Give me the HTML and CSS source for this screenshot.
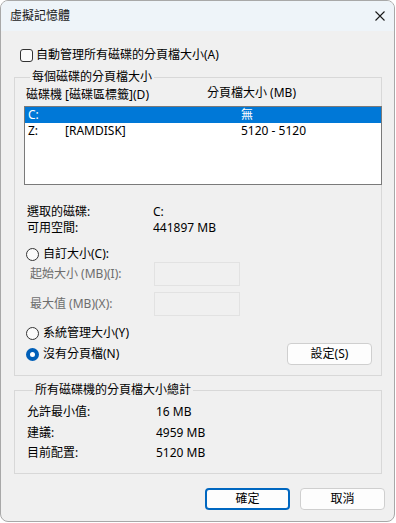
FILE: index.html
```html
<!DOCTYPE html>
<html lang="zh-Hant">
<head>
    <meta charset="UTF-8">
    <meta name="viewport" content="width=device-width, initial-scale=1.0">
    <title>虛擬記憶體</title>
    <link rel="stylesheet" href="styles.css">
</head>
<body>
    <div class="window">
        <div class="titlebar">
            <span class="title">虛擬記憶體</span>
            <svg class="close" width="10" height="10" viewBox="0 0 10 10">
                <path d="M0.5 0.5 L9.5 9.5 M9.5 0.5 L0.5 9.5" stroke="#1a1a1a" stroke-width="1.1" fill="none"/>
            </svg>
        </div>

        <div class="content">
            <div class="check-row">
                <span class="checkbox"></span>
                <span>自動管理所有磁碟的分頁檔大小(A)</span>
            </div>

            <fieldset class="group group-drives">
                <legend>每個磁碟的分頁檔大小</legend>

                <div class="list-head">
                    <span class="col-drive">磁碟機 [磁碟區標籤](D)</span>
                    <span class="col-size">分頁檔大小 (MB)</span>
                </div>
                <div class="listbox">
                    <div class="list-row selected">
                        <span>C:</span>
                        <span></span>
                        <span>無</span>
                    </div>
                    <div class="list-row">
                        <span>Z:</span>
                        <span>[RAMDISK]</span>
                        <span>5120 - 5120</span>
                    </div>
                </div>

                <div class="info">
                    <span>選取的磁碟:</span><span>C:</span>
                    <span>可用空間:</span><span>441897 MB</span>
                </div>

                <div class="radio-row custom">
                    <span class="radio"></span>
                    <span>自訂大小(C):</span>
                </div>
                <div class="field-row first">
                    <span class="field-label">起始大小 (MB)(I):</span>
                    <span class="textbox"></span>
                </div>
                <div class="field-row">
                    <span class="field-label">最大值 (MB)(X):</span>
                    <span class="textbox"></span>
                </div>

                <div class="radio-row system">
                    <span class="radio"></span>
                    <span>系統管理大小(Y)</span>
                </div>
                <div class="radio-line">
                    <div class="radio-row">
                        <span class="radio checked"></span>
                        <span>沒有分頁檔(N)</span>
                    </div>
                    <button class="btn btn-set">設定(S)</button>
                </div>
            </fieldset>

            <fieldset class="group group-total">
                <legend>所有磁碟機的分頁檔大小總計</legend>
                <div class="totals">
                    <span>允許最小值:</span><span>16 MB</span>
                    <span>建議:</span><span>4959 MB</span>
                    <span>目前配置:</span><span>5120 MB</span>
                </div>
            </fieldset>

            <div class="buttons">
                <button class="btn btn-primary">確定</button>
                <button class="btn">取消</button>
            </div>
        </div>
    </div>
</body>
</html>
```

FILE: styles.css
```css
* {
    margin: 0;
    padding: 0;
    box-sizing: border-box;
}

body {
    font-family: "Noto Sans", "Noto Sans CJK TC", sans-serif;
    font-size: 12px;
    line-height: 16px;
    color: #000;
    background: #ffffff;
}

.window {
    width: 395px;
    height: 522px;
    border: 1px solid #a8a8a8;
    border-radius: 8px;
    overflow: hidden;
    background: #f0f0f0;
    display: flex;
    flex-direction: column;
}

.titlebar {
    height: 30px;
    background: #eef4f9;
    display: flex;
    align-items: center;
    justify-content: space-between;
    padding: 0 9px 0 9px;
}

.title {
    color: #1a1a1a;
}

.content {
    flex: 1;
    padding: 16px 9px 0 13px;
}

.check-row {
    display: flex;
    align-items: center;
    gap: 3px;
    height: 16px;
    padding-left: 6px;
}

.checkbox {
    width: 13px;
    height: 13px;
    border: 1px solid #333;
    border-radius: 3px;
    background: #fbfbfb;
}

.group {
    border: 1px solid #d8d8d8;
    width: 368px;
    min-width: 0;
}

.group legend {
    margin-left: 6px;
    padding: 0 2px;
    line-height: 16px;
}

.group-drives {
    margin-top: 6px;
    padding: 2px 0 10px 9px;
}

.list-head {
    display: flex;
    height: 16px;
    padding-left: 2px;
}

.col-drive {
    width: 181px;
}

.col-size {
    position: relative;
    top: -2px;
}

.listbox {
    margin-top: 3px;
    width: 358px;
    height: 79px;
    border: 1px solid #7a7a7a;
    background: #fff;
}

.list-row {
    display: grid;
    grid-template-columns: 37px 176px 1fr;
    height: 16px;
    padding-left: 3px;
}

.list-row.selected {
    background: #0078d7;
    color: #fff;
}

.info {
    display: grid;
    grid-template-columns: 126px 1fr;
    margin-top: 19px;
    padding-left: 3px;
}

.radio-row {
    display: flex;
    align-items: center;
    gap: 4px;
    height: 16px;
    padding-left: 2px;
}

.radio-row.custom {
    margin-top: 10px;
}

.radio-row.system {
    margin-top: 9px;
}

.radio {
    width: 13px;
    height: 13px;
    border: 1px solid #333;
    border-radius: 50%;
    background: #fbfbfb;
}

.radio.checked {
    border: 4px solid #005fb8;
    background: #fff;
}

.field-row {
    display: flex;
    align-items: center;
    height: 24px;
    margin-top: 6px;
    padding-left: 6px;
    color: #6d6d6d;
}

.field-row.first {
    margin-top: 0;
}

.field-label {
    width: 124px;
}

.textbox {
    width: 86px;
    height: 24px;
    border: 1px solid #e2e2e2;
}

.radio-line {
    display: flex;
    align-items: center;
    justify-content: space-between;
    height: 22px;
    margin-top: 2px;
    padding-right: 9px;
}

.btn {
    font-family: inherit;
    font-size: 12px;
    line-height: 16px;
    color: #000;
    width: 85px;
    height: 22px;
    background: #fdfdfd;
    border: 1px solid #cfcfcf;
    border-radius: 4px;
}

.group-total {
    margin-top: 6px;
    padding: 4px 0 10px 12px;
}

.totals {
    display: grid;
    grid-template-columns: 129px 1fr;
    grid-template-rows: 20px 21px 20px;
    align-items: center;
}

.buttons {
    display: flex;
    justify-content: flex-end;
    gap: 10px;
    margin-top: 14px;
}

.btn-primary {
    border: 2px solid #0067c0;
}
```
